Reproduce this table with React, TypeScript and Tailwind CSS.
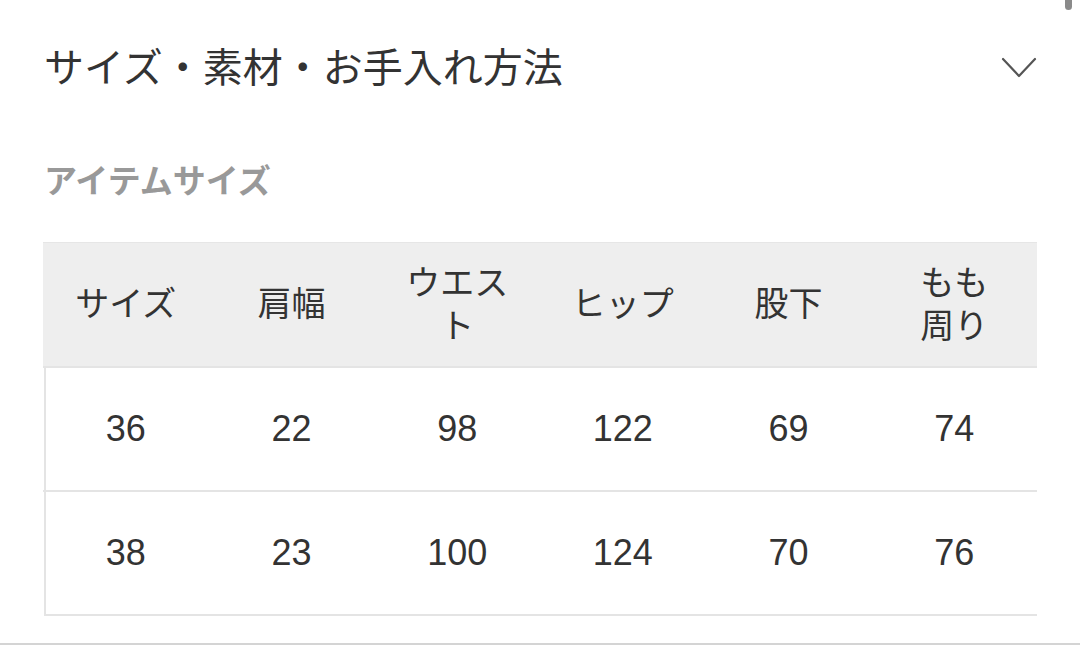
const jp = { fontFamily: '"Liberation Sans", "Noto Sans CJK JP", sans-serif' };

const headers: string[][] = [["サイズ"], ["肩幅"], ["ウエス", "ト"], ["ヒップ"], ["股下"], ["もも", "周り"]];
const rows = [
  ["36", "22", "98", "122", "69", "74"],
  ["38", "23", "100", "124", "70", "76"],
];

const App = () => {
  return (
    <div className="relative w-[1080px] h-[645px] bg-white overflow-hidden text-[#333]" style={jp}>
      <div className="absolute right-[8px] top-0 w-[7px] h-[10px] rounded-b-full bg-[#8a8a8a]" />
      <div className="px-[44px]">
        <div className="flex items-center justify-between h-[136px]">
          <h2 className="text-[40px] leading-none font-normal">サイズ・素材・お手入れ方法</h2>
          <svg width="36" height="22" viewBox="0 0 36 22" fill="none" className="mr-[-1px]">
            <path d="M2 2 L18 19 L34 2" stroke="#555" strokeWidth="2.2" strokeLinecap="round" strokeLinejoin="round" />
          </svg>
        </div>
        <div className="mt-[22px] text-[33px] leading-[48px] font-semibold text-[#999]">アイテムサイズ</div>
        <div className="mt-[36px] w-[993px] border-l-2 border-b-2 border-[#e4e4e4]">
          <div className="grid grid-cols-6 h-[124px] -ml-[3px] bg-[#eeeeee] border-t border-[#e6e6e6]">
            {headers.map((h, i) => (
              <div key={i} className="flex flex-col items-center justify-center text-[34px] leading-[43px]">
                {h.map((l, j) => (
                  <span key={j}>{l}</span>
                ))}
              </div>
            ))}
          </div>
          {rows.map((r, i) => (
            <div key={i} className="grid grid-cols-6 h-[124px] -ml-[3px] border-t-2 border-[#e4e4e4]">
              {r.map((v, j) => (
                <div key={j} className="flex items-center justify-center text-[36px]">
                  {v}
                </div>
              ))}
            </div>
          ))}
        </div>
      </div>
      <div className="mt-[27px] border-t-2 border-[#d4d4d4]" />
    </div>
  );
};

export default App;
